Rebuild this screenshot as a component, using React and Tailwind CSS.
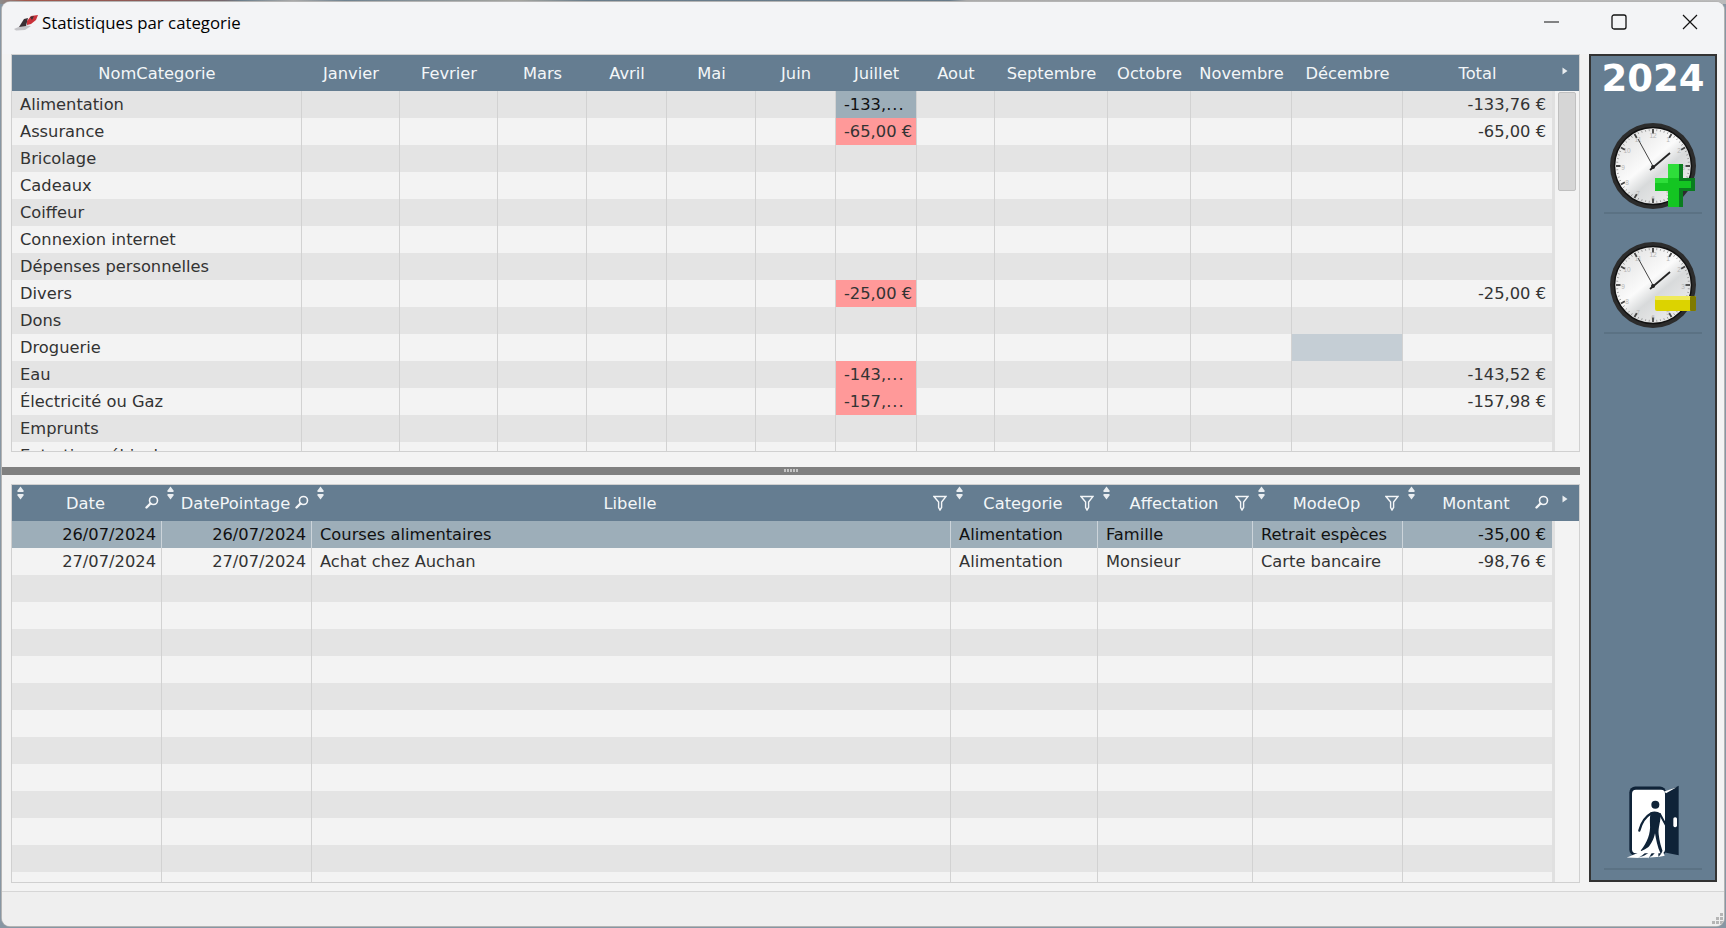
import React from "react";

const cols1 = ["NomCategorie", "Janvier", "Fevrier", "Mars", "Avril", "Mai", "Juin", "Juillet", "Aout", "Septembre", "Octobre", "Novembre", "Décembre", "Total"];
const grid1 = "grid grid-cols-[290px_98px_98px_89px_80px_89px_80px_81px_78px_113px_83px_101px_111px_149px]";
const grid2 = "grid grid-cols-[150px_150px_639px_147px_155px_150px_149px]";

const categories = [
  { name: "Alimentation", juillet: "-133,", cut: true, selected: true, total: "-133,76 €" },
  { name: "Assurance", juillet: "-65,00 €", total: "-65,00 €" },
  { name: "Bricolage" },
  { name: "Cadeaux" },
  { name: "Coiffeur" },
  { name: "Connexion internet" },
  { name: "Dépenses personnelles" },
  { name: "Divers", juillet: "-25,00 €", total: "-25,00 €" },
  { name: "Dons" },
  { name: "Droguerie", decembre: true },
  { name: "Eau", juillet: "-143,", cut: true, total: "-143,52 €" },
  { name: "Électricité ou Gaz", juillet: "-157,", cut: true, total: "-157,98 €" },
  { name: "Emprunts" },
  { name: "Entretien véhicule" },
];

const cols2 = [
  { label: "Date", tool: "search" },
  { label: "DatePointage", tool: "search" },
  { label: "Libelle", tool: "filter" },
  { label: "Categorie", tool: "filter" },
  { label: "Affectation", tool: "filter" },
  { label: "ModeOp", tool: "filter" },
  { label: "Montant", tool: "search" },
];

const operations = [
  ["26/07/2024", "26/07/2024", "Courses alimentaires", "Alimentation", "Famille", "Retrait espèces", "-35,00 €"],
  ["27/07/2024", "27/07/2024", "Achat chez Auchan", "Alimentation", "Monsieur", "Carte bancaire", "-98,76 €"],
];
const emptyRows = Array.from({ length: 12 }, () => ["", "", "", "", "", "", ""]);
const ticks = Array.from({ length: 60 }, (_, i) => i);
const hours = [
  ["12", 49, 15], ["1", 64, 19], ["2", 75, 30], ["3", 79, 47], ["4", 75, 62], ["5", 64, 73],
  ["6", 49, 78], ["7", 34, 73], ["8", 23, 62], ["9", 19, 47], ["10", 23, 30], ["11", 34, 19],
];

const SortIcon = () => (
  <svg className="absolute left-[5px] top-[1px]" width="7" height="14" viewBox="0 0 7 14" fill="#e9edf0">
    <path d="M3.5 0.5 L6.5 4.5 L6.5 6 L0.5 6 L0.5 4.5 Z" />
    <path d="M0.5 8 L6.5 8 L6.5 9.5 L3.5 13.5 L0.5 9.5 Z" />
  </svg>
);

const SearchIcon = () => (
  <svg className="absolute right-[3px] top-[10px]" width="14" height="14" viewBox="0 0 14 14" fill="none" stroke="#f4f6f8">
    <circle cx="8.5" cy="5.5" r="4" strokeWidth="1.6" />
    <path d="M5.5 8.5 L1.5 12.5" strokeWidth="2.4" strokeLinecap="round" />
  </svg>
);

const FilterIcon = () => (
  <svg className="absolute right-[4px] top-[10px]" width="14" height="16" viewBox="0 0 14 16" fill="none" stroke="#f4f6f8" strokeWidth="1.4">
    <path d="M1 1.5 H13 L8.6 7 V12.5 L7 15 L5.6 12.5 V7 Z" />
  </svg>
);

const ScrollArrow = ({ top }) => (
  <svg className={`absolute right-[11px] ${top}`} width="6" height="8" viewBox="0 0 6 8" fill="#e9edf0">
    <path d="M0.5 0.5 L5.5 4 L0.5 7.5 Z" />
  </svg>
);

const AppIcon = () => (
  <svg className="mt-[12px]" width="25" height="17" viewBox="0 0 25 17">
    <path d="M0 15 L9 11 L17 12 L11 16 L2 16.5 Z" fill="#c4c4c8" />
    <path d="M5 13 L10 5 L14 4 L12 12 Z" fill="#3a3035" />
    <path d="M13 7 L17 2 L24 1 L22 6 L17 10 L13 11 Z" fill="#c9323a" />
    <path d="M16 3 L20 2 L18 6 Z" fill="#3a3035" />
  </svg>
);

const Clock = ({ children, id }) => (
  <svg width="98" height="90" viewBox="0 0 98 90">
    <defs>
      <linearGradient id={id} x1="0.15" y1="0.1" x2="0.85" y2="0.95">
        <stop offset="0" stopColor="#e4e4e4" />
        <stop offset="0.42" stopColor="#fbfbfb" />
        <stop offset="0.6" stopColor="#d8dadb" />
        <stop offset="1" stopColor="#efefef" />
      </linearGradient>
    </defs>
    <circle cx="49" cy="45" r="43" fill="#2c2c2c" />
    <circle cx="49" cy="45" r="38.5" fill={`url(#${id})`} stroke="#111111" strokeWidth="1.5" />
    {hours.map(([n, x, y]) => (
      <text key={n} x={x} y={y} fontSize="6.5" fill="#b5b5b5" textAnchor="middle" dominantBaseline="middle" fontFamily="Liberation Sans, sans-serif">{n}</text>
    ))}
    {ticks.map((t) => (
      <line
        key={t}
        x1="49"
        y1="8"
        x2="49"
        y2={t % 5 === 0 ? 12.5 : 10}
        stroke={t % 5 === 0 ? "#444" : "#8a8a8a"}
        strokeWidth={t % 5 === 0 ? 1.8 : 0.7}
        transform={`rotate(${t * 6} 49 45)`}
      />
    ))}
    <path d="M50 47 L34 18" stroke="#444" strokeWidth="1" />
    <path d="M46 49 L66 32" stroke="#222" strokeWidth="1.8" />
    <circle cx="49" cy="46" r="2" fill="#222" />
    {children}
  </svg>
);

const DoorIcon = () => (
  <svg width="55" height="77" viewBox="380 75 165 230">
    <rect x="390" y="82" width="110" height="208" rx="18" fill="#0f2338" />
    <rect x="398" y="92" width="99" height="190" rx="12" fill="#ffffff" />
    <path d="M497 100 L538 80 V288 L497 280 Z" fill="#0f2338" />
    <path d="M495 97 L532 84 L500 102 Z" fill="#ffffff" />
    <circle cx="468" cy="137" r="12" fill="#0f2338" />
    <path d="M456 162 C438 172 426 190 420 214" fill="none" stroke="#0f2338" strokeWidth="7" strokeLinecap="round" />
    <path d="M482 165 L502 202 L516 206" fill="none" stroke="#0f2338" strokeWidth="6" strokeLinecap="round" strokeLinejoin="round" />
    <path d="M454 160 C462 155 476 156 484 164 C484 190 476 205 478 225 C480 245 486 265 492 282 L484 284 C474 262 470 240 467 222 C464 240 452 262 432 280 L424 274 C444 250 454 222 452 196 C451 182 452 170 454 160 Z" fill="#0f2338" />
    <rect x="522" y="174" width="11" height="30" rx="5" fill="#ffffff" />
    <path d="M382 295 C410 285 435 272 450 262 C440 280 430 290 415 296 C435 292 450 282 462 266 C460 280 452 292 446 298 C460 292 470 280 474 266 C478 278 478 288 476 294 C484 288 488 280 490 274 L496 290 C470 296 420 298 382 295 Z" fill="#ffffff" />
  </svg>
);

const ResizeGrip = () => (
  <svg className="absolute right-[1px] bottom-[1px]" width="12" height="12" viewBox="0 0 12 12" fill="#b5b5b5">
    <rect x="9" y="0" width="3" height="3" />
    <rect x="5" y="4" width="3" height="3" />
    <rect x="9" y="4" width="3" height="3" />
    <rect x="1" y="8" width="3" height="3" />
    <rect x="5" y="8" width="3" height="3" />
    <rect x="9" y="8" width="3" height="3" />
  </svg>
);

const Cell = ({ children, className = "", line = "border-[#d2d2d2]" }) => (
  <div className={`h-[27px] border-r ${line} px-[8px] leading-[28px] whitespace-nowrap overflow-hidden ${className}`}>
    {children}
  </div>
);

const App = () => {
  return (
    <div className="h-[928px] w-[1726px] overflow-hidden bg-[#8796a3] bg-[linear-gradient(90deg,#8c8c8c_0%,#a3574a_1.5%,#8a5a58_9%,#75696f_13%,#6c7f8c_14%,#a9a9a9_17%,#6f8290_20%,#a5a5a0_30%,#6a7d8b_34%,#677a88_55%,#aaaaaa_56%,#bbbbbb_100%)] bg-size-[100%_4px] bg-no-repeat pl-[2px] pt-[2px]">
      <div
        className="relative flex h-[924px] w-[1722px] flex-col overflow-hidden rounded-lg bg-[#f3f3f3] text-[16.3px] text-[#333333] shadow-[0_0_0_1px_#b4b4b4]"
        style={{ fontFamily: '"DejaVu Sans", sans-serif' }}
      >
        {/* title bar */}
        <div className="flex h-[52px] shrink-0 items-start bg-[#f3f4f6] pl-[12px]">
          <AppIcon />
          <span className="ml-[3px] mt-[8px] text-[16.8px] leading-[26px] text-black" style={{ fontFamily: '"Open Sans", sans-serif' }}>
            Statistiques par categorie
          </span>
          <div className="ml-auto flex">
            <div className="flex h-[40px] w-[69px] items-center justify-center">
              <svg width="15" height="2" viewBox="0 0 15 2"><path d="M0 1 H15" stroke="#111" strokeWidth="1.2" /></svg>
            </div>
            <div className="flex h-[40px] w-[69px] items-center justify-center pr-[3px]">
              <svg width="16" height="16" viewBox="0 0 16 16" fill="none"><rect x="1" y="1" width="14" height="14" rx="2" stroke="#111" strokeWidth="1.3" /></svg>
            </div>
            <div className="flex h-[40px] w-[69px] items-center justify-center">
              <svg width="16" height="16" viewBox="0 0 16 16" fill="none"><path d="M1 1 L15 15 M15 1 L1 15" stroke="#111" strokeWidth="1.2" /></svg>
            </div>
          </div>
        </div>

        <div className="flex h-[837px] shrink-0">
          <div className="flex w-[1578px] shrink-0 flex-col">
            {/* stats table */}
            <div className="ml-[9px] h-[398px] w-[1569px] border border-[#d0d0d0]">
              <div className={`relative h-[36px] bg-[#657d91] ${grid1}`}>
                {cols1.map((c) => (
                  <div key={c} className="text-center leading-[38px] text-[#f3f6f8]">{c}</div>
                ))}
                <ScrollArrow top="top-[12px]" />
              </div>
              <div className="flex h-[360px]">
                <div className="w-[1540px] overflow-hidden">
                  {categories.map((row, i) => (
                    <div key={row.name} className={`${grid1} ${i % 2 === 0 ? "bg-[#e4e4e4]" : "bg-[#f3f3f3]"}`}>
                      <Cell>{row.name}</Cell>
                      {cols1.slice(1, 7).map((c) => <Cell key={c} />)}
                      <Cell className={row.selected ? "bg-[#9daeb9] text-[#111111]" : row.juillet ? "bg-[#ff9999]" : ""}>
                        {row.juillet}
                        {row.cut && <span className="tracking-[1px]">...</span>}
                      </Cell>
                      {cols1.slice(8, 12).map((c) => <Cell key={c} />)}
                      <Cell className={row.decembre ? "bg-[#c5ced5]" : ""} />
                      <Cell line="border-transparent" className="text-right !pr-[5px]">{row.total}</Cell>
                    </div>
                  ))}
                </div>
                <div className="w-[27px] border-l-[3px] border-[#e0e0e0] pl-[3px] pt-[1px]">
                  <div className="h-[99px] w-[18px] rounded-[2px] border border-[#c0c0c0] bg-[#d6d6d6]" />
                </div>
              </div>
            </div>

            {/* splitter */}
            <div className="mt-[15px] flex h-[8px] w-[1578px] items-start justify-center bg-[#808080] pr-[1px] pt-[2px]">
              <div className="flex gap-[1px]">
                {[0, 1, 2, 3, 4].map((d) => <span key={d} className="h-[3px] w-[2px] bg-[#c4c4c4]" />)}
              </div>
            </div>

            {/* operations table */}
            <div className="ml-[9px] mt-[9px] h-[399px] w-[1569px] border border-[#d0d0d0]">
              <div className={`relative h-[36px] bg-[#657d91] ${grid2}`}>
                {cols2.map((c) => (
                  <div key={c.label} className="relative pr-[3px] text-center leading-[38px] text-[#f3f6f8]">
                    <SortIcon />
                    {c.label}
                    {c.tool === "search" ? <SearchIcon /> : <FilterIcon />}
                  </div>
                ))}
                <ScrollArrow top="top-[10px]" />
              </div>
              <div className="flex h-[361px]">
                <div className="w-[1540px] overflow-hidden">
                  {[...operations, ...emptyRows].map((row, i) => {
                    const rowBg = i === 0 ? "bg-[#9daeb9] text-[#111111]" : i % 2 === 0 ? "bg-[#e4e4e4]" : "bg-[#f3f3f3]";
                    const line = i === 0 ? "border-[#ccd4da]" : "border-[#d2d2d2]";
                    return (
                      <div key={i} className={`${grid2} ${rowBg}`}>
                        <Cell line={line} className="text-right !pr-[5px]">{row[0]}</Cell>
                        <Cell line={line} className="text-right !pr-[5px]">{row[1]}</Cell>
                        <Cell line={line}>{row[2]}</Cell>
                        <Cell line={line}>{row[3]}</Cell>
                        <Cell line={line}>{row[4]}</Cell>
                        <Cell line={line}>{row[5]}</Cell>
                        <Cell line="border-transparent" className="text-right !pr-[5px]">{row[6]}</Cell>
                      </div>
                    );
                  })}
                </div>
                <div className="w-[27px] border-l-[3px] border-[#e0e0e0]" />
              </div>
            </div>
          </div>

          {/* side panel */}
          <div className="ml-[9px] flex h-[828px] w-[128px] shrink-0 flex-col items-center border-2 border-[#333333] bg-[#657d91]">
            <div className="h-[44px] text-[37px] font-bold leading-[46px] text-white">2024</div>
            <div className="flex h-[114px] w-[98px] items-end border-b-2 border-[#5b7284] pb-[1px]">
              <Clock id="faceA">
                <path d="M64 43 H79 V57 H91 V70 H79 V86 H64 V70 H51 V57 H64 Z" fill="#14c522" />
                <path d="M64 43 H76 V60 H88 V57 H51 V62 H64 Z" fill="#2ede3a" />
                <path d="M79 43 V57 H91 V70 H79 V86 H75 V67 H87 V60 H75 V43 Z" fill="#0a7d1f" />
              </Clock>
            </div>
            <div className="flex h-[120px] w-[98px] items-end border-b-2 border-[#5b7284] pb-[2px]">
              <Clock id="faceB">
                <rect x="51" y="56" width="41" height="15" rx="2" fill="#dcd300" />
                <rect x="51" y="56" width="41" height="4" rx="1" fill="#f0ea5a" />
                <rect x="86" y="56" width="6" height="15" rx="1" fill="#7f7a00" />
              </Clock>
            </div>
            <div className="mt-auto mb-[10px] flex w-[98px] justify-center border-b-2 border-[#5b7284] pb-[7px]">
              <DoorIcon />
            </div>
          </div>
        </div>

        {/* status bar */}
        <div className="flex-1 border-t border-[#d6d6d6] bg-[#efefef]" />
        <ResizeGrip />
      </div>
    </div>
  );
};

export default App;
